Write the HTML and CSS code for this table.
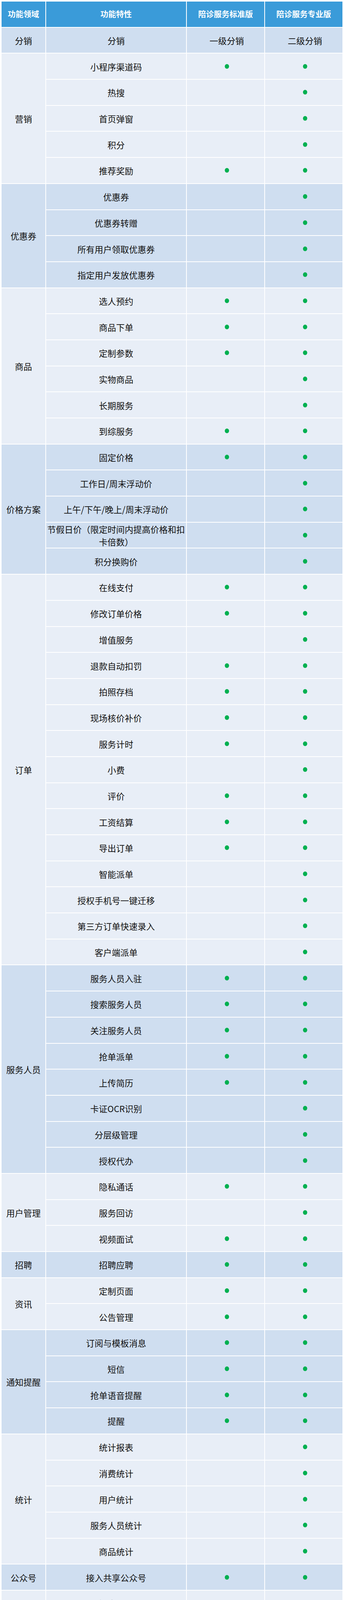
FILE: index.html
```html
<!DOCTYPE html>
<html lang="zh-CN">
<head>
<meta charset="utf-8">
<title>功能对比</title>
<link rel="stylesheet" href="styles.css">
</head>
<body>
<div class="grid">
  <div class="hd">功能领域</div><div class="hd">功能特性</div><div class="hd">陪诊服务标准版</div><div class="hd">陪诊服务专业版</div>

  <div class="grp dk">
    <div class="area s1">分销</div>
    <div class="c">分销</div><div class="c v">一级分销</div><div class="c v">二级分销</div>
  </div>

  <div class="grp lt">
    <div class="area s5">营销</div>
    <div class="c">小程序渠道码</div><div class="c v"><i class="dot"></i></div><div class="c v"><i class="dot"></i></div>
    <div class="c">热搜</div><div class="c v"></div><div class="c v"><i class="dot"></i></div>
    <div class="c">首页弹窗</div><div class="c v"></div><div class="c v"><i class="dot"></i></div>
    <div class="c">积分</div><div class="c v"></div><div class="c v"><i class="dot"></i></div>
    <div class="c">推荐奖励</div><div class="c v"><i class="dot"></i></div><div class="c v"><i class="dot"></i></div>
  </div>

  <div class="grp dk">
    <div class="area s4">优惠券</div>
    <div class="c">优惠券</div><div class="c v"></div><div class="c v"><i class="dot"></i></div>
    <div class="c">优惠券转赠</div><div class="c v"></div><div class="c v"><i class="dot"></i></div>
    <div class="c">所有用户领取优惠券</div><div class="c v"></div><div class="c v"><i class="dot"></i></div>
    <div class="c">指定用户发放优惠券</div><div class="c v"></div><div class="c v"><i class="dot"></i></div>
  </div>

  <div class="grp lt">
    <div class="area s6">商品</div>
    <div class="c">选人预约</div><div class="c v"><i class="dot"></i></div><div class="c v"><i class="dot"></i></div>
    <div class="c">商品下单</div><div class="c v"><i class="dot"></i></div><div class="c v"><i class="dot"></i></div>
    <div class="c">定制参数</div><div class="c v"><i class="dot"></i></div><div class="c v"><i class="dot"></i></div>
    <div class="c">实物商品</div><div class="c v"></div><div class="c v"><i class="dot"></i></div>
    <div class="c">长期服务</div><div class="c v"></div><div class="c v"><i class="dot"></i></div>
    <div class="c">到综服务</div><div class="c v"><i class="dot"></i></div><div class="c v"><i class="dot"></i></div>
  </div>

  <div class="grp dk">
    <div class="area s5">价格方案</div>
    <div class="c">固定价格</div><div class="c v"><i class="dot"></i></div><div class="c v"><i class="dot"></i></div>
    <div class="c">工作日/周末浮动价</div><div class="c v"></div><div class="c v"><i class="dot"></i></div>
    <div class="c">上午/下午/晚上/周末浮动价</div><div class="c v"></div><div class="c v"><i class="dot"></i></div>
    <div class="c wrap">节假日价（限定时间内提高价格和扣卡倍数）</div><div class="c v"></div><div class="c v"><i class="dot"></i></div>
    <div class="c">积分换购价</div><div class="c v"></div><div class="c v"><i class="dot"></i></div>
  </div>

  <div class="grp lt">
    <div class="area s15">订单</div>
    <div class="c">在线支付</div><div class="c v"><i class="dot"></i></div><div class="c v"><i class="dot"></i></div>
    <div class="c">修改订单价格</div><div class="c v"><i class="dot"></i></div><div class="c v"><i class="dot"></i></div>
    <div class="c">增值服务</div><div class="c v"></div><div class="c v"><i class="dot"></i></div>
    <div class="c">退款自动扣罚</div><div class="c v"><i class="dot"></i></div><div class="c v"><i class="dot"></i></div>
    <div class="c">拍照存档</div><div class="c v"><i class="dot"></i></div><div class="c v"><i class="dot"></i></div>
    <div class="c">现场核价补价</div><div class="c v"><i class="dot"></i></div><div class="c v"><i class="dot"></i></div>
    <div class="c">服务计时</div><div class="c v"><i class="dot"></i></div><div class="c v"><i class="dot"></i></div>
    <div class="c">小费</div><div class="c v"></div><div class="c v"><i class="dot"></i></div>
    <div class="c">评价</div><div class="c v"><i class="dot"></i></div><div class="c v"><i class="dot"></i></div>
    <div class="c">工资结算</div><div class="c v"><i class="dot"></i></div><div class="c v"><i class="dot"></i></div>
    <div class="c">导出订单</div><div class="c v"><i class="dot"></i></div><div class="c v"><i class="dot"></i></div>
    <div class="c">智能派单</div><div class="c v"></div><div class="c v"><i class="dot"></i></div>
    <div class="c">授权手机号一键迁移</div><div class="c v"></div><div class="c v"><i class="dot"></i></div>
    <div class="c">第三方订单快速录入</div><div class="c v"></div><div class="c v"><i class="dot"></i></div>
    <div class="c">客户端派单</div><div class="c v"></div><div class="c v"><i class="dot"></i></div>
  </div>

  <div class="grp dk">
    <div class="area s8">服务人员</div>
    <div class="c">服务人员入驻</div><div class="c v"><i class="dot"></i></div><div class="c v"><i class="dot"></i></div>
    <div class="c">搜索服务人员</div><div class="c v"><i class="dot"></i></div><div class="c v"><i class="dot"></i></div>
    <div class="c">关注服务人员</div><div class="c v"><i class="dot"></i></div><div class="c v"><i class="dot"></i></div>
    <div class="c">抢单派单</div><div class="c v"><i class="dot"></i></div><div class="c v"><i class="dot"></i></div>
    <div class="c">上传简历</div><div class="c v"><i class="dot"></i></div><div class="c v"><i class="dot"></i></div>
    <div class="c">卡证OCR识别</div><div class="c v"></div><div class="c v"><i class="dot"></i></div>
    <div class="c">分层级管理</div><div class="c v"></div><div class="c v"><i class="dot"></i></div>
    <div class="c">授权代办</div><div class="c v"></div><div class="c v"><i class="dot"></i></div>
  </div>

  <div class="grp lt">
    <div class="area s3">用户管理</div>
    <div class="c">隐私通话</div><div class="c v"><i class="dot"></i></div><div class="c v"><i class="dot"></i></div>
    <div class="c">服务回访</div><div class="c v"></div><div class="c v"><i class="dot"></i></div>
    <div class="c">视频面试</div><div class="c v"><i class="dot"></i></div><div class="c v"><i class="dot"></i></div>
  </div>

  <div class="grp dk">
    <div class="area s1">招聘</div>
    <div class="c">招聘应聘</div><div class="c v"><i class="dot"></i></div><div class="c v"><i class="dot"></i></div>
  </div>

  <div class="grp lt">
    <div class="area s2">资讯</div>
    <div class="c">定制页面</div><div class="c v"><i class="dot"></i></div><div class="c v"><i class="dot"></i></div>
    <div class="c">公告管理</div><div class="c v"><i class="dot"></i></div><div class="c v"><i class="dot"></i></div>
  </div>

  <div class="grp dk">
    <div class="area s4">通知提醒</div>
    <div class="c">订阅与模板消息</div><div class="c v"><i class="dot"></i></div><div class="c v"><i class="dot"></i></div>
    <div class="c">短信</div><div class="c v"><i class="dot"></i></div><div class="c v"><i class="dot"></i></div>
    <div class="c">抢单语音提醒</div><div class="c v"><i class="dot"></i></div><div class="c v"><i class="dot"></i></div>
    <div class="c">提醒</div><div class="c v"><i class="dot"></i></div><div class="c v"><i class="dot"></i></div>
  </div>

  <div class="grp lt">
    <div class="area s5">统计</div>
    <div class="c">统计报表</div><div class="c v"></div><div class="c v"><i class="dot"></i></div>
    <div class="c">消费统计</div><div class="c v"></div><div class="c v"><i class="dot"></i></div>
    <div class="c">用户统计</div><div class="c v"></div><div class="c v"><i class="dot"></i></div>
    <div class="c">服务人员统计</div><div class="c v"></div><div class="c v"><i class="dot"></i></div>
    <div class="c">商品统计</div><div class="c v"></div><div class="c v"><i class="dot"></i></div>
  </div>

  <div class="grp dk">
    <div class="area s1">公众号</div>
    <div class="c">接入共享公众号</div><div class="c v"><i class="dot"></i></div><div class="c v"><i class="dot"></i></div>
  </div>

  <div class="grp lt">
    <div class="area s2">门店</div>
    <div class="c">门店展示</div><div class="c v"><i class="dot"></i></div><div class="c v"><i class="dot"></i></div>
    <div class="c">门店派单</div><div class="c v"><i class="dot"></i></div><div class="c v"><i class="dot"></i></div>
  </div>

  <div class="grp dk">
    <div class="area s7">其他</div>
    <div class="c">更换图片图标</div><div class="c v"><i class="dot"></i></div><div class="c v"><i class="dot"></i></div>
    <div class="c">更换轮播图片</div><div class="c v"><i class="dot"></i></div><div class="c v"><i class="dot"></i></div>
    <div class="c">休假管理</div><div class="c v"><i class="dot"></i></div><div class="c v"><i class="dot"></i></div>
    <div class="c">长短地址转换</div><div class="c v"><i class="dot"></i></div><div class="c v"><i class="dot"></i></div>
    <div class="c">帮助中心</div><div class="c v"><i class="dot"></i></div><div class="c v"><i class="dot"></i></div>
    <div class="c">装修素材</div><div class="c v"><i class="dot"></i></div><div class="c v"><i class="dot"></i></div>
    <div class="c">系统日志</div><div class="c v"><i class="dot"></i></div><div class="c v"><i class="dot"></i></div>
  </div>
</div>
</body>
</html>
```

FILE: styles.css
```css
html, body {
  margin: 0;
  padding: 0;
  background: #ffffff;
}

body {
  padding: 4px 4px 0;
  font-family: "Noto Sans CJK SC", "Noto Sans", sans-serif;
  color: #111111;
}

.grid {
  display: grid;
  grid-template-columns: 112px 358px 198px 198px;
  grid-auto-rows: 64.7px;
  gap: 2px;
  width: 872px;
}

.grp {
  display: contents;
}

.hd,
.area,
.c {
  display: flex;
  align-items: center;
  justify-content: center;
  text-align: center;
  font-size: 22px;
  line-height: 32px;
  overflow: hidden;
}

.hd {
  background: #3a9bd9;
  color: #ffffff;
  font-weight: 700;
  font-size: 20px;
}

.area {
  grid-column: 1;
}

.c {
  padding: 0 2px;
}

.v {
  padding-left: 8px;
  padding-right: 2px;
}

.dk > div {
  background: #cfdef0;
}

.lt > div {
  background: #e8eef7;
}

.dot {
  display: block;
  width: 11px;
  height: 12px;
  border-radius: 50%;
  background: #00b050;
}

.s1 { grid-row: span 1; }
.s2 { grid-row: span 2; }
.s3 { grid-row: span 3; }
.s4 { grid-row: span 4; }
.s5 { grid-row: span 5; }
.s6 { grid-row: span 6; }
.s7 { grid-row: span 7; }
.s8 { grid-row: span 8; }
.s15 { grid-row: span 15; }
```
